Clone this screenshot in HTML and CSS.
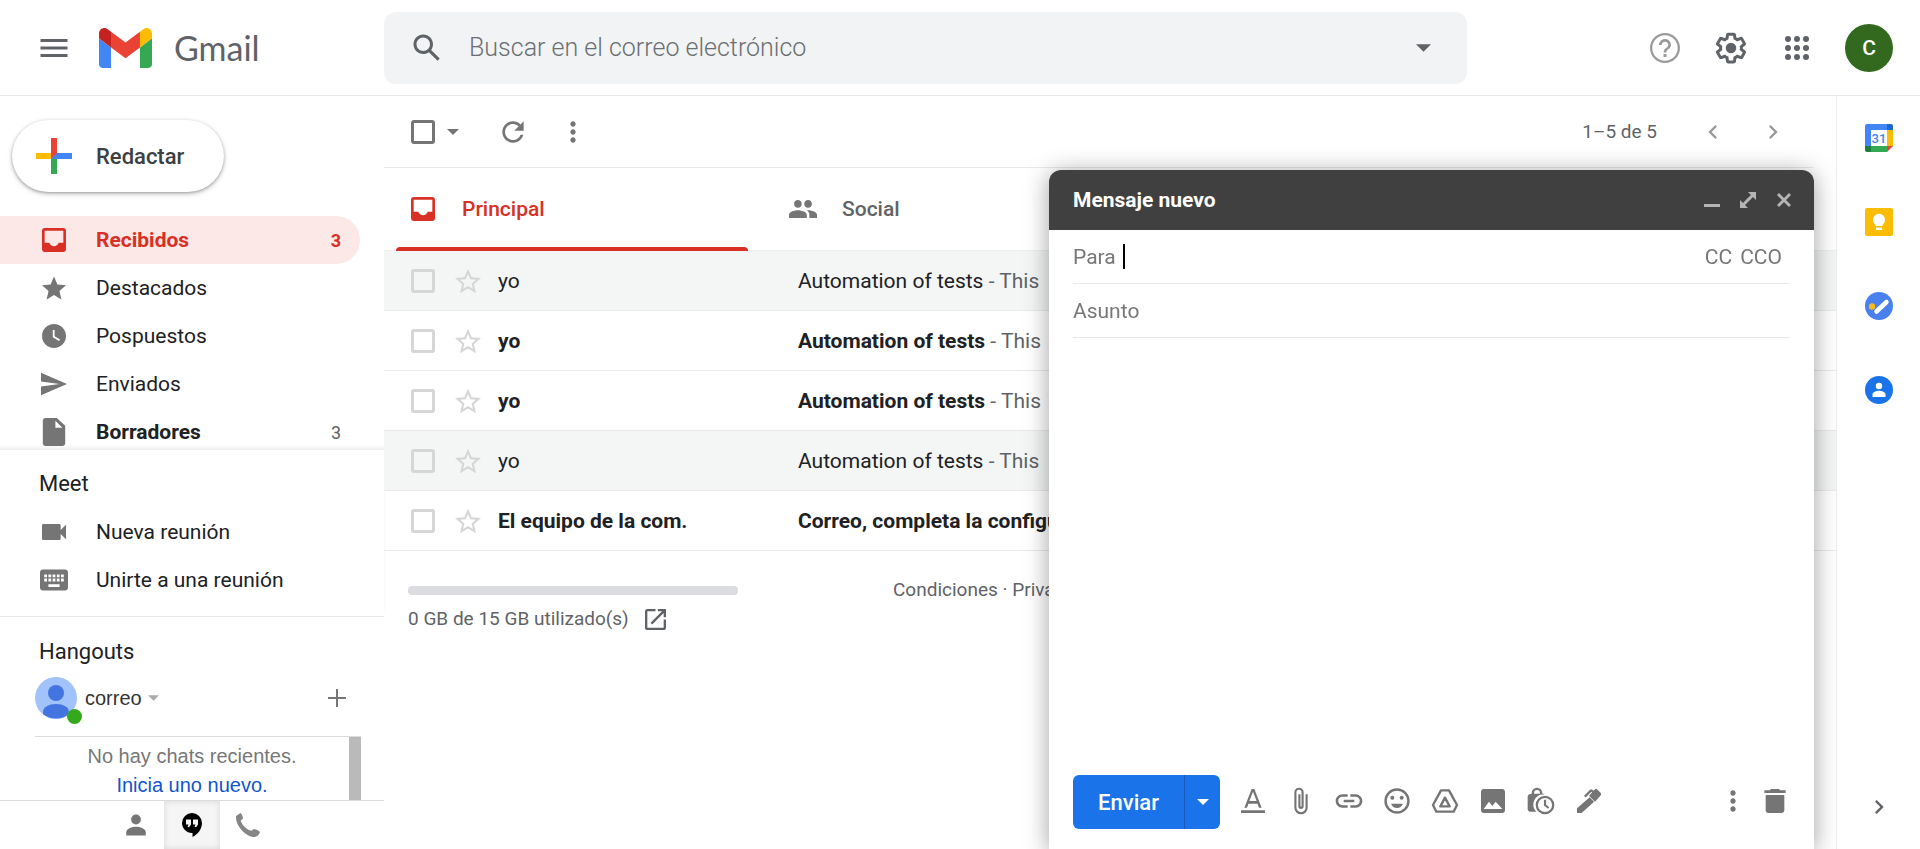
FILE: index.html
```html
<!DOCTYPE html>
<html lang="es">
<head>
<meta charset="utf-8">
<title>Recibidos - Gmail</title>
<meta name="viewport" content="width=device-width, initial-scale=1">
<link rel="stylesheet" href="styles.css">
</head>
<body>
<svg class="sprite" aria-hidden="true">
  <symbol id="inbox" viewBox="3 3 18 18"><path d="M19 3H5c-1.100 0-2 .9-2 2v14c0 1.100.9 2 2 2h14c1.100 0 2-.9 2-2V5c0-1.100-.9-2-2-2zm0 11h-3.500c-.6 1.600-1.900 2.600-3.500 2.600S9.100 15.600 8.500 14H5V5h14v9z"/></symbol>
  <symbol id="star" viewBox="2 2 20 19"><path d="M22 9.240l-7.190-.62L12 2 9.190 8.630 2 9.240l5.460 4.730L5.820 21 12 17.270 18.180 21l-1.630-7.030L22 9.240zM12 15.400l-3.760 2.270 1-4.280-3.320-2.880 4.380-.38L12 6.100l1.710 4.040 4.380.38-3.320 2.880 1 4.280L12 15.400z"/></symbol>
  <symbol id="caret" viewBox="0 0 12 6"><path d="M0 0h12L6 6z"/></symbol>
  <symbol id="dots" viewBox="0 0 24 24"><path d="M12 8c1.100 0 2-.9 2-2s-.9-2-2-2-2 .9-2 2 .9 2 2 2zm0 2c-1.100 0-2 .9-2 2s.9 2 2 2 2-.9 2-2-.9-2-2-2zm0 6c-1.100 0-2 .9-2 2s.9 2 2 2 2-.9 2-2-.9-2-2-2z"/></symbol>
  <symbol id="right" viewBox="0 0 24 24"><path d="M8.590 16.590L13.170 12 8.590 7.410 10 6l6 6-6 6z"/></symbol>
</svg>

<header class="header">
  <div class="brand">
    <button class="icon-btn" aria-label="Menú principal"><svg class="i36 dark" viewBox="0 0 24 24"><path d="M3 18h18v-2H3v2zm0-5h18v-2H3v2zm0-7v2h18V6H3z"/></svg></button>
    <svg class="logo" viewBox="52 42 88 66" aria-hidden="true"><path fill="#4285f4" d="M58 108h14V74L52 59v43c0 3.320 2.690 6 6 6"/><path fill="#34a853" d="M120 108h14c3.320 0 6-2.690 6-6V59l-20 15"/><path fill="#fbbc04" d="M120 48v26l20-15v-8c0-7.420-8.470-11.650-14.400-7.200"/><path fill="#ea4335" d="M72 74V48l24 18 24-18v26L96 92"/><path fill="#c5221f" d="M52 51v8l20 15V48l-5.600-4.200c-5.940-4.450-14.400-.22-14.400 7.200"/></svg>
    <span class="brand-name">Gmail</span>
  </div>
  <form class="search" role="search">
    <button class="icon-btn" type="button" aria-label="Buscar"><svg class="i36 dark" viewBox="0 0 24 24"><path d="M20.490 19l-5.730-5.730C15.530 12.200 16 10.910 16 9.500 16 5.910 13.090 3 9.500 3S3 5.910 3 9.500 5.910 16 9.500 16c1.410 0 2.700-.47 3.770-1.240L19 20.490 20.490 19zM5 9.500C5 7.010 7.010 5 9.500 5S14 7.010 14 9.500 11.990 14 9.500 14 5 11.990 5 9.500z"/></svg></button>
    <input class="search-input" type="text" placeholder="Buscar en el correo electrónico" aria-label="Buscar en el correo electrónico">
    <button class="icon-btn" type="button" aria-label="Opciones de búsqueda"><svg class="caret-lg dark"><use href="#caret"/></svg></button>
  </form>
  <div class="header-actions">
    <button class="icon-btn" aria-label="Asistencia"><svg class="i36 light" viewBox="0 0 24 24"><path d="M11 18h2v-2h-2v2zm1-16C6.480 2 2 6.480 2 12s4.480 10 10 10 10-4.480 10-10S17.520 2 12 2zm0 18.500c-4.700 0-8.500-3.800-8.500-8.500S7.300 3.500 12 3.500s8.500 3.800 8.500 8.500-3.800 8.500-8.500 8.500zM12 6c-2.210 0-4 1.790-4 4h1.800c0-1.200 1-2.200 2.200-2.200s2.200 1 2.200 2.200c0 2-3.100 1.900-3.100 5h1.800c0-2.200 3.100-2.500 3.100-5 0-2.210-1.790-4-4-4z"/></svg></button>
    <button class="icon-btn" aria-label="Configuración"><svg class="i36 dark" viewBox="0 0 24 24"><path d="M13.850 22.250h-3.700c-.74 0-1.360-.54-1.450-1.270l-.27-1.890c-.27-.14-.53-.29-.79-.46l-1.800.72c-.7.26-1.470-.03-1.810-.65L2.200 15.530c-.35-.66-.2-1.440.36-1.880l1.530-1.190c-.01-.15-.02-.3-.02-.46 0-.15.01-.31.02-.46l-1.520-1.190c-.59-.45-.74-1.260-.37-1.880l1.850-3.190c.34-.62 1.110-.9 1.790-.63l1.810.73c.26-.17.52-.32.78-.46l.27-1.910c.09-.7.71-1.250 1.440-1.250h3.700c.74 0 1.360.54 1.450 1.270l.27 1.890c.27.14.53.29.79.46l1.800-.72c.71-.26 1.480.03 1.820.65l1.840 3.180c.36.66.2 1.440-.36 1.880l-1.520 1.190c.01.15.02.3.02.46s-.01.31-.02.46l1.520 1.190c.56.45.72 1.230.37 1.860l-1.860 3.220c-.34.62-1.110.9-1.800.63l-1.800-.72c-.26.17-.52.32-.78.46l-.27 1.910c-.1.680-.72 1.220-1.460 1.220zm-3.230-2h2.760l.37-2.550.53-.22c.44-.18.88-.44 1.340-.78l.45-.34 2.380.96 1.380-2.400-2.030-1.580.07-.56c.03-.26.06-.51.06-.78s-.03-.53-.06-.78l-.07-.56 2.030-1.580-1.390-2.400-2.390.96-.45-.35c-.42-.32-.87-.58-1.330-.77l-.52-.22-.37-2.550h-2.760l-.37 2.550-.53.21c-.44.19-.88.44-1.340.79l-.45.33-2.380-.95-1.390 2.390 2.030 1.580-.07.56a7 7 0 0 0-.06.79c0 .26.02.53.06.78l.07.56-2.030 1.580 1.380 2.400 2.390-.96.45.35c.43.33.86.58 1.330.77l.53.22.38 2.550z"/><circle cx="12" cy="12" r="3.500"/></svg></button>
    <button class="icon-btn" aria-label="Aplicaciones de Google"><svg class="i36 dark" viewBox="0 0 24 24"><circle cx="6" cy="6" r="2"/><circle cx="12" cy="6" r="2"/><circle cx="18" cy="6" r="2"/><circle cx="6" cy="12" r="2"/><circle cx="12" cy="12" r="2"/><circle cx="18" cy="12" r="2"/><circle cx="6" cy="18" r="2"/><circle cx="12" cy="18" r="2"/><circle cx="18" cy="18" r="2"/></svg></button>
    <button class="account" aria-label="Cuenta de Google">C</button>
  </div>
</header>

<div class="body">
  <aside class="sidebar">
    <button class="compose-btn"><svg class="i36" viewBox="0 0 36 36" aria-hidden="true"><path fill="#34a853" d="M15 18h6v18h-6z"/><path fill="#4285f4" d="M18 15h18v6H15z"/><path fill="#fbbc04" d="M0 15h18l-3 6H0z"/><path fill="#ea4335" d="M15 0h6v15l-6 6z"/></svg>Redactar</button>
    <nav class="folders">
      <a class="row selected" href="#"><span class="slot"><svg class="i24"><use href="#inbox"/></svg></span><span class="label">Recibidos</span><span class="count">3</span></a>
      <a class="row" href="#"><span class="slot"><svg class="i24" viewBox="2 2 20 19"><path d="M12 17.270L18.180 21l-1.640-7.030L22 9.240l-7.190-.61L12 2 9.190 8.630 2 9.240l5.460 4.730L5.820 21z"/></svg></span><span class="label">Destacados</span></a>
      <a class="row" href="#"><span class="slot"><svg class="i24" viewBox="2 2 20 20"><path d="M12 2C6.500 2 2 6.500 2 12s4.500 10 10 10 10-4.500 10-10S17.500 2 12 2zm4.200 14.200L11 13V7h1.500v5.200l4.500 2.700-.8 1.300z"/></svg></span><span class="label">Pospuestos</span></a>
      <a class="row" href="#"><span class="slot"><svg class="i26" viewBox="2 2 21 20"><path d="M2 21l21-9L2 3v7l15 2-15 2z"/></svg></span><span class="label">Enviados</span></a>
      <a class="row unread" href="#"><span class="slot"><svg class="i28" viewBox="2 2 20 20"><path d="M14 2H6c-1.100 0-2 .9-2 2v16c0 1.100.9 2 2 2h12c1.100 0 2-.9 2-2V7.500zm-1 7V4l5 5z"/></svg></span><span class="label">Borradores</span><span class="count">3</span></a>
    </nav>
    <section class="meet">
      <h2 class="section-title">Meet</h2>
      <a class="row" href="#"><span class="slot"><svg class="i24" viewBox="3 3 18 18"><path d="M17 10.500V7c0-.55-.45-1-1-1H4c-.55 0-1 .45-1 1v10c0 .55.45 1 1 1h12c.55 0 1-.45 1-1v-3.500l4 4v-11z"/></svg></span><span class="label">Nueva reunión</span></a>
      <a class="row" href="#"><span class="slot"><svg class="i28" viewBox="2 2 20 20"><path d="M20 4.500H4c-1.100 0-2 .9-2 2v11c0 1.100.9 2 2 2h16c1.100 0 2-.9 2-2v-11c0-1.100-.9-2-2-2zM11 8h2v2h-2zm0 3h2v2h-2zM8 8h2v2H8zm0 3h2v2H8zm-1 2H5v-2h2zm0-3H5V8h2zm9 7H8v-2h8zm0-4h-2v-2h2zm0-3h-2V8h2zm3 3h-2v-2h2zm0-3h-2V8h2z"/></svg></span><span class="label">Unirte a una reunión</span></a>
    </section>
    <section class="hangouts">
      <h2 class="section-title">Hangouts</h2>
      <div class="chat-panel">
        <div class="chat-account">
          <span class="chat-avatar"><svg class="face" viewBox="0 0 42 42" aria-hidden="true"><circle cx="21" cy="21" r="21" fill="#a1c2fa"/><circle cx="21" cy="16" r="8" fill="#4374e0"/><path fill="#4374e0" d="M8 37v-2c0-5 6-8 13-8s13 3 13 8v2a21 21 0 0 1-26 0z"/></svg><span class="status"></span></span>
          <button class="chat-name">correo <svg class="caret-chat"><use href="#caret"/></svg></button>
          <button class="icon-btn add" aria-label="Nueva conversación"><svg viewBox="0 0 18 18"><path d="M8 0h2v8h8v2h-8v8H8v-8H0V8h8z"/></svg></button>
        </div>
        <div class="chat-list">
          <p class="chat-empty">No hay chats recientes.<br><a href="#">Inicia uno nuevo.</a></p>
          <div class="scrollbar"></div>
        </div>
      </div>
    </section>
    <div class="chat-tabs">
      <button class="chat-tab" aria-label="Contactos"><svg class="i20" viewBox="4 3 16 18"><circle cx="12" cy="7.500" r="4"/><path d="M4 20.500V18c0-3 5-4.500 8-4.500s8 1.500 8 4.500v2.500z"/></svg></button>
      <button class="chat-tab active" aria-label="Conversaciones"><svg class="i24" viewBox="0 0 24 24"><path d="M12 0a10 10 0 0 0-10 10c0 5.500 4.500 10 10 10h.5v4c6-3 9.500-8.500 9.500-14A10 10 0 0 0 12 0z"/><path fill="#f5f5f5" d="M6 6.500h5v5L9.200 14H7.500l1-2.500H6zm7 0h5v5L16.200 14h-1.700l1-2.500H13z"/></svg></button>
      <button class="chat-tab" aria-label="Llamadas"><svg class="i24 phone" viewBox="0 0 24 24"><path d="M0 3l4.500-3c1 .4 2.600 4 2.600 5.600L4.700 7.500c1 4.300 5.600 8.900 10.600 10.300l2.600-1.900c2 .1 5.700 2 6.100 3.100-.9 2.800-3 5-5.500 5C9 23.500-.8 12 0 3z"/></svg></button>
    </div>
  </aside>

  <main class="main">
    <div class="toolbar">
      <input type="checkbox" class="check strong" aria-label="Seleccionar todo">
      <button class="icon-btn select-more" aria-label="Más opciones de selección"><svg class="caret-sm"><use href="#caret"/></svg></button>
      <button class="icon-btn refresh" aria-label="Actualizar"><svg class="i32" viewBox="0 0 24 24"><path d="M17.650 6.350C16.200 4.900 14.210 4 12 4c-4.420 0-7.990 3.580-7.990 8s3.570 8 7.990 8c3.730 0 6.840-2.550 7.730-6h-2.080c-.82 2.330-3.040 4-5.650 4-3.310 0-6-2.690-6-6s2.690-6 6-6c1.660 0 3.140.69 4.220 1.780L13 11h7V4l-2.350 2.350z"/></svg></button>
      <button class="icon-btn" aria-label="Más"><svg class="i32"><use href="#dots"/></svg></button>
      <span class="range">1–5 de 5</span>
      <button class="icon-btn" aria-label="Más recientes"><svg class="i28 light" viewBox="0 0 24 24"><path d="M15.410 7.410L14 6l-6 6 6 6 1.410-1.410L10.830 12z"/></svg></button>
      <button class="icon-btn older" aria-label="Más antiguos"><svg class="i28 light"><use href="#right"/></svg></button>
    </div>
    <div class="tabs" role="tablist">
      <button class="tab current" role="tab" aria-selected="true"><span class="slot"><svg class="i24"><use href="#inbox"/></svg></span>Principal</button>
      <button class="tab" role="tab"><span class="slot"><svg class="i28" viewBox="1 1 22 22"><path d="M16 11c1.660 0 2.990-1.340 2.990-3S17.660 5 16 5s-3 1.340-3 3 1.340 3 3 3zm-8 0c1.660 0 2.990-1.340 2.990-3S9.660 5 8 5 5 6.340 5 8s1.340 3 3 3zm0 2c-2.330 0-7 1.170-7 3.500V19h14v-2.500c0-2.330-4.670-3.500-7-3.500zm8 0c-.29 0-.62.02-.97.05 1.160.84 1.970 1.970 1.970 3.450V19h6v-2.500c0-2.330-4.670-3.500-7-3.500z"/></svg></span>Social</button>
    </div>
    <table class="mails">
      <colgroup><col class="c-check"><col class="c-star"><col class="c-from"><col></colgroup>
      <tr class="read"><td class="pick"><input type="checkbox" class="check" aria-label="Seleccionar"></td><td><button class="icon-btn" aria-label="Destacar"><svg class="i26 faint"><use href="#star"/></svg></button></td><td>yo</td><td><b>Automation of tests</b> <span class="snippet">- This</span></td></tr>
      <tr><td class="pick"><input type="checkbox" class="check" aria-label="Seleccionar"></td><td><button class="icon-btn" aria-label="Destacar"><svg class="i26 faint"><use href="#star"/></svg></button></td><td>yo</td><td><b>Automation of tests</b> <span class="snippet">- This</span></td></tr>
      <tr><td class="pick"><input type="checkbox" class="check" aria-label="Seleccionar"></td><td><button class="icon-btn" aria-label="Destacar"><svg class="i26 faint"><use href="#star"/></svg></button></td><td>yo</td><td><b>Automation of tests</b> <span class="snippet">- This</span></td></tr>
      <tr class="read"><td class="pick"><input type="checkbox" class="check" aria-label="Seleccionar"></td><td><button class="icon-btn" aria-label="Destacar"><svg class="i26 faint"><use href="#star"/></svg></button></td><td>yo</td><td><b>Automation of tests</b> <span class="snippet">- This</span></td></tr>
      <tr><td class="pick"><input type="checkbox" class="check" aria-label="Seleccionar"></td><td><button class="icon-btn" aria-label="Destacar"><svg class="i26 faint"><use href="#star"/></svg></button></td><td>El equipo de la com.</td><td><b>Correo, completa la configuración</b></td></tr>
    </table>
    <footer class="footer">
      <div class="storage">
        <div class="meter"></div>
        <div class="usage">0 GB de 15 GB utilizado(s) <a href="#" aria-label="Administrar"><svg class="open" viewBox="3 3 18 18"><path d="M19 19H5V5h7V3H5c-1.110 0-2 .9-2 2v14c0 1.100.89 2 2 2h14c1.100 0 2-.9 2-2v-7h-2v7zM14 3v2h3.590l-9.830 9.830 1.410 1.410L19 6.410V10h2V3h-7z"/></svg></a></div>
      </div>
      <div class="legal"><a href="#">Condiciones</a> · <a href="#">Privacidad</a></div>
    </footer>
  </main>

  <aside class="apps">
    <a href="#" aria-label="Calendar"><svg class="i28" viewBox="0 0 28 28"><path fill="#4285f4" d="M2 0h20v6H6v16H0V2a2 2 0 0 1 2-2z"/><path fill="#1967d2" d="M22 0h4a2 2 0 0 1 2 2v4h-6z"/><path fill="#fbbc04" d="M22 6h6v16h-6z"/><path fill="#34a853" d="M6 22h16v6H6z"/><path fill="#188038" d="M0 22h6v6H2a2 2 0 0 1-2-2z"/><path fill="#ea4335" d="M22 22h6l-6 6z"/><path fill="#fff" d="M6 6h16v16H6z"/><text class="cal-day" x="14" y="19" text-anchor="middle">31</text></svg></a>
    <a href="#" aria-label="Keep"><svg class="i28" viewBox="0 0 28 28"><rect width="28" height="28" rx="2" fill="#fbbc04"/><path fill="#fff" d="M10.500 18v-1.300a6 6 0 1 1 7 0V18zM11 19.500h6V22h-6z"/></svg></a>
    <a href="#" aria-label="Tasks"><svg class="i28" viewBox="0 0 28 28"><circle cx="14" cy="14" r="14" fill="#4a80ee"/><path stroke="#fff" stroke-width="4.500" stroke-linecap="round" d="M11.500 19.500l10-9.500"/><circle cx="7" cy="14.500" r="3.200" fill="#f4b91a"/></svg></a>
    <a href="#" aria-label="Contactos"><svg class="i28" viewBox="0 0 28 28"><circle cx="14" cy="14" r="14" fill="#1a73e8"/><circle cx="14" cy="10" r="3.200" fill="#fff"/><path fill="#fff" d="M7.500 21v-2.500c0-2.700 3.800-3.800 6.500-3.800s6.500 1.100 6.500 3.800V21z"/></svg></a>
    <button class="icon-btn collapse" aria-label="Ocultar panel"><svg class="i28 dark"><use href="#right"/></svg></button>
  </aside>
</div>

<section class="compose" role="dialog" aria-label="Mensaje nuevo">
  <div class="compose-head">
    <h2 class="compose-title">Mensaje nuevo</h2>
    <button class="icon-btn" aria-label="Minimizar"><svg class="i16" viewBox="0 0 16 16"><path d="M0 12h16v3H0z"/></svg></button>
    <button class="icon-btn" aria-label="Pantalla completa"><svg class="i16" viewBox="0 0 16 16"><path d="M8 0h8v8l-3-3-3.200 3.200L5 13l3 3H0V8l3 3 4-4.200L11 3z"/></svg></button>
    <button class="icon-btn" aria-label="Cerrar"><svg class="i16" viewBox="0 0 16 16"><path d="M3 1l5 5 5-5 2 2-5 5 5 5-2 2-5-5-5 5-2-2 5-5-5-5z"/></svg></button>
  </div>
  <div class="fields">
    <div class="field"><label for="to">Para</label><span class="cursor"></span><input id="to" type="text"><button class="cc">CC</button><button class="cc">CCO</button></div>
    <div class="field"><input type="text" placeholder="Asunto" aria-label="Asunto"></div>
  </div>
  <textarea class="message" aria-label="Cuerpo del mensaje"></textarea>
  <div class="actions">
    <div class="send"><button class="send-main">Enviar</button><button class="send-more" aria-label="Más opciones de envío"><svg class="caret-sm"><use href="#caret"/></svg></button></div>
    <div class="tools">
      <button class="icon-btn" aria-label="Formato"><svg class="i32" viewBox="0 0 24 24"><path d="M3 19h18v2H3zM5.500 17h2l1.100-3h6.800l1.100 3h2L13 3h-2zm3.800-5L12 5l2.700 7z"/></svg></button>
      <button class="icon-btn" aria-label="Adjuntar"><svg class="i32" viewBox="0 0 24 24"><path d="M17 7v10a5 5 0 0 1-10 0V5.500a3.500 3.500 0 0 1 7 0V16a2 2 0 0 1-4 0V7h1.600v8.800c0 .55.800.55.800 0V5.500a1.900 1.900 0 0 0-3.800 0V17a3.400 3.400 0 0 0 6.800 0V7z"/></svg></button>
      <button class="icon-btn" aria-label="Insertar enlace"><svg class="i32" viewBox="0 0 24 24"><path d="M3.900 12c0-1.710 1.390-3.100 3.100-3.100h4V7H7c-2.760 0-5 2.240-5 5s2.240 5 5 5h4v-1.900H7c-1.710 0-3.100-1.390-3.100-3.100zM8 13h8v-2H8v2zm9-6h-4v1.900h4c1.710 0 3.100 1.390 3.100 3.100s-1.390 3.100-3.100 3.100h-4V17h4c2.760 0 5-2.240 5-5s-2.240-5-5-5z"/></svg></button>
      <button class="icon-btn" aria-label="Insertar emoji"><svg class="i32" viewBox="0 0 24 24"><path d="M12 2.500a9.500 9.500 0 1 0 0 19 9.500 9.500 0 0 0 0-19zm0 17.200a7.700 7.700 0 1 1 0-15.400 7.700 7.700 0 0 1 0 15.400zM7.500 14c.8 2 2.500 3.300 4.500 3.300s3.700-1.300 4.500-3.300z"/><circle cx="8.500" cy="9.500" r="1.500"/><circle cx="15.500" cy="9.500" r="1.500"/></svg></button>
      <button class="icon-btn" aria-label="Insertar desde Drive"><svg class="i32" viewBox="0 0 24 24"><path fill="none" stroke="currentColor" stroke-width="1.800" stroke-linejoin="round" d="M9 4h6l6 11-2.500 5h-13L3 15zM12 9.500L8.500 16h7z"/></svg></button>
      <button class="icon-btn" aria-label="Insertar foto"><svg class="i32" viewBox="0 0 24 24"><path d="M21 19V5c0-1.100-.9-2-2-2H5c-1.100 0-2 .9-2 2v14c0 1.100.9 2 2 2h14c1.100 0 2-.9 2-2zM5 18l4-5.500 2.500 3.300 2.500-3.300 5 5.500z"/></svg></button>
      <button class="icon-btn" aria-label="Modo confidencial"><svg class="i32" viewBox="0 0 24 24"><path d="M14 6.500h-1V6a4 4 0 0 0-8 0v.500c-1.500 0-3 .8-3 2.200V18c0 1.100.9 2 2 2h4.500A7.500 7.500 0 0 1 14.500 7.200zM6.800 6.500V6a2.200 2.200 0 0 1 4.400 0v.500z"/><path fill-rule="evenodd" d="M15 8a7 7 0 1 0 0 14 7 7 0 0 0 0-14zm0 12.300a5.300 5.300 0 1 1 0-10.600 5.300 5.300 0 0 1 0 10.600zM14.200 11h1.600v3.600l2.400 2.100-1 1.200-3-2.600z"/></svg></button>
      <button class="icon-btn" aria-label="Insertar firma"><svg class="i32" viewBox="0 0 24 24"><path d="M12.500 9.200l3.300 3.300L6.500 21H3v-3.500zM20.700 5.800l-2.500-2.500a1.300 1.300 0 0 0-1.800 0L15.300 4.400l-.8-.8a1.200 1.200 0 0 0-1.700 0L8.300 8.100l1.200 1.200 4.200-4.200.6.600-2.300 2.300 4.500 4.500 4.200-4.600c.5-.5.500-1.500 0-2.100z"/></svg></button>
    </div>
    <div class="tools end">
      <button class="icon-btn" aria-label="Más opciones"><svg class="i32"><use href="#dots"/></svg></button>
      <button class="icon-btn" aria-label="Descartar borrador"><svg class="i32" viewBox="0 0 24 24"><path d="M5 7.500V19c0 1.100.9 2 2 2h10c1.100 0 2-.9 2-2V7.500zM20 4h-4l-1-1H9L8 4H4v2h16z"/></svg></button>
    </div>
  </div>
</section>
</body>
</html>
```

FILE: styles.css
```css
* { box-sizing: border-box; }

body {
  margin: 0;
  height: 100vh;
  display: flex;
  flex-direction: column;
  overflow: hidden;
  background: #fff;
  color: #202124;
  font-family: Roboto, "Liberation Sans", sans-serif;
  font-size: 21px;
}

button, input, textarea {
  font: inherit;
  color: inherit;
  background: none;
  border: 0;
  padding: 0;
  margin: 0;
  outline: 0;
}

a { color: inherit; text-decoration: none; }
h2, p { margin: 0; font-size: inherit; font-weight: 500; }

svg { display: block; flex: none; fill: currentColor; }
.sprite { position: absolute; width: 0; height: 0; }
.i16 { width: 16px; height: 16px; }
.i20 { width: 20px; height: 22px; }
.i24 { width: 24px; height: 24px; }
.i26 { width: 26px; height: 26px; }
.i28 { width: 28px; height: 28px; }
.i32 { width: 32px; height: 32px; }
.i36 { width: 36px; height: 36px; }
.caret-lg { width: 15px; height: 8px; }
.caret-sm { width: 12px; height: 6px; }
.dark { color: #5f6368; }
.light { color: #9a9a9a; }
.faint { color: #d5d6d6; }

.icon-btn {
  display: grid;
  place-items: center;
  flex: none;
  color: #757575;
}

/* Header */
.header {
  display: grid;
  grid-template-columns: 384px 1fr 453px;
  align-items: center;
  height: 96px;
  flex: none;
  border-bottom: 1px solid #e8eaed;
}
.brand { display: flex; align-items: center; padding-left: 36px; }
.logo { width: 53px; height: 40px; margin-left: 27px; }
.brand-name {
  margin-left: 22px;
  color: #5f6368;
  font-family: Lato, Roboto, sans-serif;
  font-size: 34px;
  line-height: 40px;
}
.search {
  display: flex;
  align-items: center;
  height: 72px;
  padding: 0 36px 0 25px;
  background: #f1f3f4;
  border-radius: 12px;
}
.search-input {
  flex: 1;
  min-width: 0;
  margin-left: 24px;
  font-size: 25px;
  font-weight: 300;
}
.search-input::placeholder { color: #6b6f73; opacity: 1; }
.header-actions {
  display: flex;
  align-items: center;
  justify-content: flex-end;
  gap: 30px;
  padding-right: 27px;
}
.account {
  width: 48px;
  height: 48px;
  border-radius: 50%;
  background: #33691e;
  color: #fff;
  font-weight: 500;
}

.body { display: flex; flex: 1; min-height: 0; }

/* Sidebar */
.sidebar { display: flex; flex-direction: column; width: 384px; flex: none; }
.compose-btn {
  display: flex;
  align-items: center;
  align-self: flex-start;
  flex: none;
  gap: 24px;
  height: 72px;
  margin: 24px 0 24px 12px;
  padding: 0 40px 0 24px;
  border-radius: 36px;
  color: #3c4043;
  font-weight: 500;
  font-size: 22px;
  box-shadow: 0 1px 3px rgba(60, 64, 67, .35), 0 2px 5px rgba(60, 64, 67, .25);
}
.folders { flex: 1; min-height: 0; overflow: hidden; }
.row {
  display: flex;
  align-items: center;
  height: 48px;
  margin-right: 24px;
  padding: 0 19px 0 36px;
  border-radius: 0 24px 24px 0;
}
.slot { display: grid; place-items: center; width: 36px; color: #757575; }
.row .label { flex: 1; margin-left: 24px; }
.count { font-size: 18px; color: #5f6368; }
.unread .label { font-weight: 700; }
.selected { background: #fce8e6; color: #d93025; font-weight: 700; }
.selected .slot, .selected .count { color: inherit; }

.section-title { height: 48px; line-height: 48px; padding-left: 39px; font-size: 22px; font-weight: 400; }
.meet {
  flex: none;
  padding: 10px 0 12px;
  border-top: 1px solid #eceeef;
  box-shadow: 0 -2px 3px rgba(0, 0, 0, .06);
}
.hangouts { flex: none; padding-top: 11px; border-top: 1px solid #e8eaed; }
.chat-panel { margin: 0 23px 0 35px; font-family: "Liberation Sans", Arial, sans-serif; font-size: 20px; }
.chat-account {
  display: flex;
  align-items: center;
  height: 61px;
  padding-bottom: 16px;
  border-bottom: 1px solid #dcdcdc;
}
.chat-avatar { position: relative; flex: none; }
.face { width: 42px; height: 42px; }
.status {
  position: absolute;
  right: -5px;
  bottom: -5px;
  width: 15px;
  height: 15px;
  border-radius: 50%;
  background: #34a91b;
}
.chat-name { display: flex; align-items: center; gap: 6px; margin-left: 8px; color: #333; }
.caret-chat { width: 11px; height: 6px; color: #aaa; }
.add { margin-left: auto; margin-right: 15px; }
.add svg { width: 18px; height: 18px; }
.chat-list { display: flex; }
.chat-empty {
  flex: 1;
  padding-top: 5px;
  line-height: 29px;
  font-weight: 400;
  text-align: center;
  color: #777;
}
.chat-empty a { color: #15c; }
.scrollbar { width: 12px; background: #bababa; }
.chat-tabs {
  display: flex;
  justify-content: center;
  flex: none;
  height: 49px;
  border-top: 1px solid #dcdcdc;
}
.chat-tab { display: grid; place-items: center; width: 56px; color: #757575; }
.chat-tab.active { background: #f5f5f5; color: #000; box-shadow: inset 0 0 6px rgba(0, 0, 0, .12); }
.phone { color: #858585; }

/* Message list */
.main { flex: 1; min-width: 0; border-right: 1px solid #eceeef; }
.toolbar {
  display: flex;
  align-items: center;
  height: 72px;
  margin-right: 23px;
  padding-left: 27px;
  border-bottom: 1px solid #e8eaed;
}
.check {
  appearance: none;
  display: block;
  flex: none;
  width: 24px;
  height: 24px;
  border: 3px solid #d5d6d6;
  border-radius: 3px;
}
.check.strong { border-color: #757575; }
.select-more { margin-left: 12px; }
.refresh { margin: 0 28px 0 38px; }
.range { margin-left: auto; margin-right: 42px; font-size: 19px; color: #5f6368; }
.older { margin: 0 26px 0 32px; }

.tabs { display: flex; height: 83px; border-bottom: 1px solid #eceeef; }
.tab {
  position: relative;
  display: flex;
  align-items: center;
  gap: 21px;
  width: 380px;
  padding-left: 21px;
  color: #5f6368;
  font-weight: 500;
}
.tab.current, .tab.current .slot { color: #d93025; }
.tab.current::after {
  content: "";
  position: absolute;
  left: 12px;
  right: 16px;
  bottom: -1px;
  height: 4px;
  background: #d93025;
  border-radius: 4px 4px 0 0;
}

.mails { width: 100%; table-layout: fixed; border-spacing: 0; }
.c-check { width: 66px; }
.c-star { width: 48px; }
.c-from { width: 300px; }
.mails td {
  height: 60px;
  padding: 0;
  border-bottom: 1px solid #e8eaed;
  font-weight: 700;
  white-space: nowrap;
  overflow: hidden;
}
.mails .pick { padding-left: 27px; }
.mails b { font-weight: inherit; }
.mails .read { background: #f4f6f6; }
.mails .read td { font-weight: 400; }
.mails .snippet { font-weight: 400; color: #5f6368; }
.mails .icon-btn { width: 36px; }

.footer { display: flex; padding: 26px 24px 0; font-size: 19px; color: #5f6368; }
.storage { width: 330px; margin-top: 9px; }
.meter { height: 9px; border-radius: 4px; background: #dadce0; }
.usage { display: flex; align-items: center; gap: 16px; margin-top: 12px; line-height: 24px; }
.open { width: 21px; height: 21px; }
.legal { margin-left: 155px; line-height: 26px; }

/* App rail */
.apps {
  display: flex;
  flex-direction: column;
  align-items: center;
  width: 83px;
  flex: none;
  gap: 56px;
  padding: 28px 0;
}
.apps a { display: block; }
.cal-day { font-size: 13px; font-weight: 500; fill: #4285f4; }
.collapse { margin-top: auto; }

/* Compose window floats over the list */
.compose {
  position: fixed;
  top: 170px;
  right: 106px;
  bottom: 0;
  width: 765px;
  display: flex;
  flex-direction: column;
  background: #fff;
  border-radius: 12px 12px 0 0;
  box-shadow: 0 3px 24px rgba(0, 0, 0, .38);
}
.compose-head {
  display: flex;
  align-items: center;
  gap: 20px;
  height: 60px;
  flex: none;
  padding: 0 22px 0 24px;
  background: #404040;
  border-radius: 12px 12px 0 0;
}
.compose-head .icon-btn { color: #b5b5b5; }
.compose-title { flex: 1; color: #fff; font-weight: 700; }
.fields { padding: 0 24px; color: #777; }
.field { display: flex; align-items: center; height: 54px; border-bottom: 1px solid #e8e8e8; }
.field input { flex: 1; min-width: 0; }
.field input::placeholder { color: #777; opacity: 1; }
.cursor { width: 2px; height: 25px; margin-left: 7px; background: #000; }
.cc { margin-right: 8px; }
.message { flex: 1; padding: 12px 24px; resize: none; }
.actions { display: flex; align-items: center; flex: none; padding: 0 23px 20px 24px; }
.send { display: flex; height: 54px; border-radius: 6px; background: #1a73e8; color: #fff; font-size: 22px; font-weight: 500; }
.send-main { width: 111px; }
.send-more { display: grid; place-items: center; width: 36px; border-left: 1px solid #185abc; }
.tools { display: flex; gap: 16px; padding-bottom: 2px; margin-left: 17px; }
.tools.end { gap: 10px; margin-left: auto; }
```
